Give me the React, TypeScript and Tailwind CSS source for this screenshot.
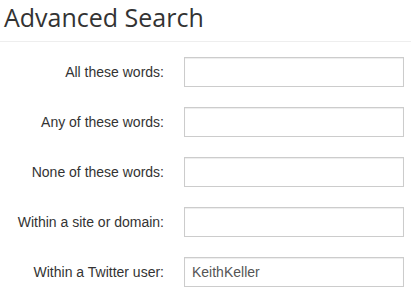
import { useState } from 'react'

const fields = [
  { name: 'all', label: 'All these words:', value: '' },
  { name: 'any', label: 'Any of these words:', value: '' },
  { name: 'none', label: 'None of these words:', value: '' },
  { name: 'site', label: 'Within a site or domain:', value: '' },
  { name: 'user', label: 'Within a Twitter user:', value: 'KeithKeller' },
]

export default function App() {
  const [values, setValues] = useState<Record<string, string>>(
    Object.fromEntries(fields.map((f) => [f.name, f.value]))
  )

  return (
    <div className="w-[411px] h-[297px] bg-white overflow-hidden">
      <h1 className="pl-[4px] pb-[7px] text-[25px] leading-[34px] font-medium text-[#333] border-b border-[#eee] font-['Open_Sans',sans-serif]">
        Advanced Search
      </h1>
      <form className="mt-[15px] flex flex-col gap-[20px] font-['Liberation_Sans',Arial,sans-serif] text-[14px]">
        {fields.map((f) => (
          <div key={f.name} className="flex items-center h-[30px]">
            <label htmlFor={f.name} className="w-[164px] text-right text-[#333]">
              {f.label}
            </label>
            <input
              id={f.name}
              name={f.name}
              value={values[f.name]}
              onChange={(e) => setValues({ ...values, [f.name]: e.target.value })}
              className="ml-[20px] w-[220px] h-[30px] px-[7px] border border-[#ccc] text-[#555] text-[14px] shadow-[inset_0_1px_1px_rgba(0,0,0,0.075)] outline-none"
            />
          </div>
        ))}
      </form>
    </div>
  )
}
